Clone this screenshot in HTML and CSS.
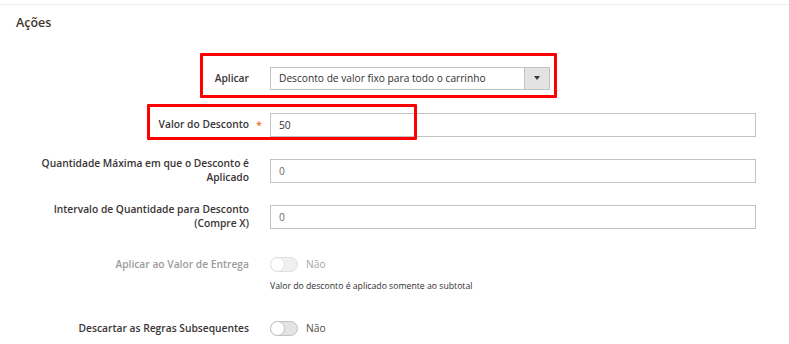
FILE: index.html
```html
<!DOCTYPE html>
<html lang="pt-BR">
<head>
  <meta charset="UTF-8">
  <meta name="viewport" content="width=device-width, initial-scale=1.0">
  <title>Ações</title>
  <link rel="stylesheet" href="styles.css">
</head>
<body>
  <div class="panel">
    <h2 class="panel-title">Ações</h2>

    <div class="form">
      <!-- Aplicar -->
      <div class="field">
        <span class="highlight hl-apply"></span>
        <label class="field-label">Aplicar</label>
        <span class="mark"></span>
        <div class="control">
          <div class="select">
            <span class="select-text">Desconto de valor fixo para todo o carrinho</span>
            <span class="select-arrow"></span>
          </div>
        </div>
      </div>

      <!-- Valor do Desconto -->
      <div class="field">
        <span class="highlight hl-amount"></span>
        <label class="field-label">Valor do Desconto</label>
        <span class="mark">*</span>
        <div class="control">
          <input class="input" type="text" value="50">
        </div>
      </div>

      <div class="field">
        <label class="field-label">Quantidade Máxima em que o Desconto é Aplicado</label>
        <span class="mark"></span>
        <div class="control">
          <input class="input input-muted" type="text" value="0">
        </div>
      </div>

      <div class="field">
        <label class="field-label">Intervalo de Quantidade para Desconto (Compre X)</label>
        <span class="mark"></span>
        <div class="control">
          <input class="input input-muted" type="text" value="0">
        </div>
      </div>

      <!-- disabled -->
      <div class="field field-toggle">
        <label class="field-label disabled">Aplicar ao Valor de Entrega</label>
        <span class="mark"></span>
        <div class="control">
          <div class="toggle disabled">
            <span class="switch"></span>
            <span class="toggle-text">Não</span>
          </div>
          <div class="note">Valor do desconto é aplicado somente ao subtotal</div>
        </div>
      </div>

      <div class="field field-toggle">
        <label class="field-label">Descartar as Regras Subsequentes</label>
        <span class="mark"></span>
        <div class="control">
          <div class="toggle">
            <span class="switch"></span>
            <span class="toggle-text">Não</span>
          </div>
        </div>
      </div>
    </div>
  </div>
</body>
</html>
```

FILE: styles.css
```css
body {
  margin: 0;
  background-color: #fff;
  font-family: 'Open Sans', 'Liberation Sans', sans-serif;
  color: #303030;
}
.panel {
  margin-top: 4px;
  border-top: 1px solid #ececec;
  padding: 9px 0 0 16px;
}
.panel-title {
  margin: 0;
  font-size: 12.5px;
  line-height: 18px;
  font-weight: 600;
  color: #41362f;
}
.form {
  margin-top: 34px;
  margin-left: -16px;
  display: flex;
  flex-direction: column;
  gap: 22px;
}
.field {
  position: relative;
  display: grid;
  grid-template-columns: 249px 21px 486px;
  grid-template-rows: 24px;
  align-items: center;
}
.field-label {
  padding-left: 36px;
  font-size: 10.25px;
  line-height: 14px;
  font-weight: 600;
  text-align: right;
  color: #3a3535;
}
.mark {
  padding-left: 7px;
  font-size: 11px;
  color: #eb5202;
}
.input {
  box-sizing: border-box;
  width: 100%;
  height: 24px;
  margin: 0;
  padding: 0 8px;
  border: 1px solid #c2c2c2;
  border-radius: 0;
  font-family: inherit;
  font-size: 10.25px;
  color: #303030;
}
.input-muted {
  color: #6b6b6b;
}
.select {
  box-sizing: border-box;
  width: 280px;
  height: 23px;
  border: 1px solid #c2c2c2;
  display: flex;
  align-items: center;
}
.select-text {
  flex: 1;
  padding-left: 8px;
  font-size: 10.2px;
  color: #303030;
}
.select-arrow {
  width: 24px;
  height: 100%;
  background-color: #e3e3e3;
  border-left: 1px solid #c2c2c2;
  display: flex;
  align-items: center;
  justify-content: center;
}
.select-arrow::after {
  content: "";
  border-left: 3px solid transparent;
  border-right: 3px solid transparent;
  border-top: 4px solid #41362f;
}
.field-toggle {
  grid-template-rows: auto;
  align-items: start;
  margin-top: 2px;
}
.field-toggle .field-label {
  min-height: 24px;
  display: flex;
  align-items: center;
  justify-content: flex-end;
}
.toggle {
  height: 24px;
  display: flex;
  align-items: center;
  gap: 8px;
}
.switch {
  position: relative;
  box-sizing: border-box;
  width: 28px;
  height: 15px;
  border: 1px solid #c2c2c2;
  border-radius: 8px;
  background-color: #e3e3e3;
}
.switch::before {
  content: "";
  position: absolute;
  left: -1px;
  top: -1px;
  width: 15px;
  height: 15px;
  box-sizing: border-box;
  border: 1px solid #c2c2c2;
  border-radius: 50%;
  background-color: #fff;
}
.toggle-text {
  font-size: 10.25px;
  color: #514943;
}
.disabled {
  opacity: 0.5;
}
.note {
  margin-top: 5px;
  font-size: 8.7px;
  line-height: 11px;
  color: #303030;
}
.highlight {
  position: absolute;
  border: 3px solid #f00;
  border-radius: 1px;
  pointer-events: none;
}
.hl-apply {
  left: 200px;
  top: -13px;
  width: 351px;
  height: 39px;
}
.hl-amount {
  left: 147px;
  top: -8px;
  width: 264px;
  height: 30px;
}
```
